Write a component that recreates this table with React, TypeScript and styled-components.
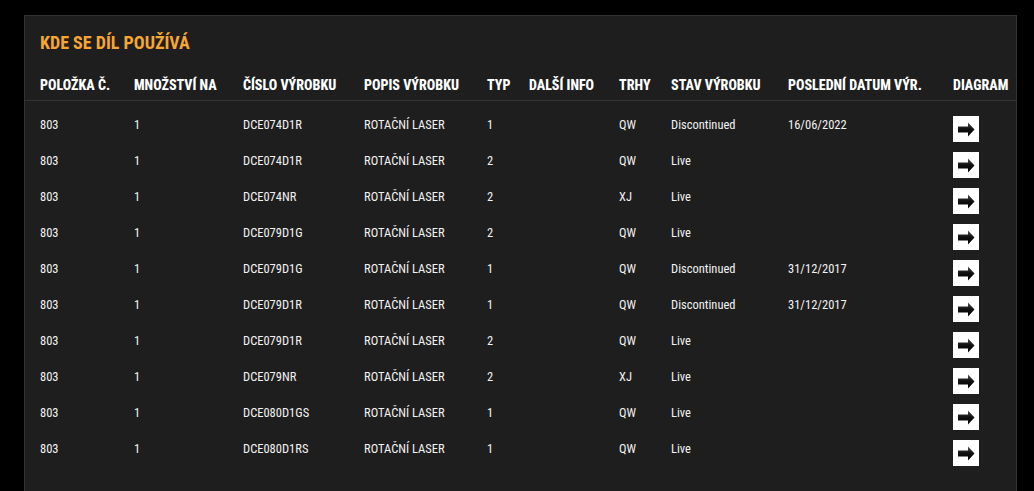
import React from "react";
import styled, { createGlobalStyle } from "styled-components";

const GlobalStyle = createGlobalStyle`
  html, body { margin: 0; padding: 0; background: #000; }
  body { font-family: "Roboto Condensed", "Roboto", "Liberation Sans", sans-serif; color: #fff; overflow: hidden; }
`;

const Page = styled.div`
  padding: 15px 17px 0 24px;
`;

const Panel = styled.section`
  background: #1e1e1e;
  border: 1px solid #333;
  border-bottom: none;
  min-height: calc(100vh - 15px);
  box-sizing: border-box;
`;

const Title = styled.h2`
  margin: 0;
  padding: 16px 15px 0;
  font-size: 18px;
  line-height: 22px;
  font-weight: 700;
  color: #f7a631;
  text-transform: uppercase;
  letter-spacing: 0;
`;

const COLS = "94px 109px 121px 123px 42px 90px 52px 117px 165px 1fr";

const HeaderRow = styled.div`
  display: grid;
  grid-template-columns: ${COLS};
  margin-top: 23px;
  padding: 0 0 7px 15px;
  border-bottom: 1px solid #333;
`;

const HeadCell = styled.div`
  font-size: 14px;
  line-height: 16px;
  font-weight: 800;
  text-transform: uppercase;
  white-space: nowrap;
  color: #fff;
`;

const Body = styled.div`
  padding-top: 10px;
`;

const Row = styled.div`
  display: grid;
  grid-template-columns: ${COLS};
  height: 36px;
  padding-left: 15px;
  align-items: start;
`;

const Cell = styled.div`
  padding-top: 7px;
  font-size: 12.5px;
  line-height: 14px;
  font-weight: 400;
  color: #f2f2f2;
  white-space: nowrap;
`;

const IconCell = styled.div`
  padding-top: 5px;
`;

const DiagramButton = styled.a`
  display: flex;
  align-items: center;
  justify-content: center;
  width: 26px;
  height: 26px;
  background: #fff;
  cursor: pointer;
`;

const ArrowIcon = () => (
  <svg width="17" height="15" viewBox="0 0 17 15" aria-hidden>
    <defs>
      <linearGradient id="ag" x1="0" y1="0" x2="0" y2="1">
        <stop offset="0" stopColor="#555" />
        <stop offset="0.45" stopColor="#111" />
        <stop offset="1" stopColor="#000" />
      </linearGradient>
    </defs>
    <path d="M0 4.5 H10 V0.5 L16.5 7.5 L10 14.5 V10.5 H0 Z" fill="url(#ag)" />
  </svg>
);

type Item = {
  code: string;
  type: string;
  market: string;
  status: string;
  date?: string;
};

const items: Item[] = [
  { code: "DCE074D1R", type: "1", market: "QW", status: "Discontinued", date: "16/06/2022" },
  { code: "DCE074D1R", type: "2", market: "QW", status: "Live" },
  { code: "DCE074NR", type: "2", market: "XJ", status: "Live" },
  { code: "DCE079D1G", type: "2", market: "QW", status: "Live" },
  { code: "DCE079D1G", type: "1", market: "QW", status: "Discontinued", date: "31/12/2017" },
  { code: "DCE079D1R", type: "1", market: "QW", status: "Discontinued", date: "31/12/2017" },
  { code: "DCE079D1R", type: "2", market: "QW", status: "Live" },
  { code: "DCE079NR", type: "2", market: "XJ", status: "Live" },
  { code: "DCE080D1GS", type: "1", market: "QW", status: "Live" },
  { code: "DCE080D1RS", type: "1", market: "QW", status: "Live" },
];

const headers = [
  "Položka č.",
  "Množství na",
  "Číslo výrobku",
  "Popis výrobku",
  "Typ",
  "Další info",
  "Trhy",
  "Stav výrobku",
  "Poslední datum výr.",
  "Diagram",
];

export default function App() {
  return (
    <>
      <GlobalStyle />
      <Page>
        <Panel>
          <Title>Kde se díl používá</Title>
          <HeaderRow>
            {headers.map((h) => (
              <HeadCell key={h}>{h}</HeadCell>
            ))}
          </HeaderRow>
          <Body>
            {items.map((it, i) => (
              <Row key={i}>
                <Cell>803</Cell>
                <Cell>1</Cell>
                <Cell>{it.code}</Cell>
                <Cell>ROTAČNÍ LASER</Cell>
                <Cell>{it.type}</Cell>
                <Cell></Cell>
                <Cell>{it.market}</Cell>
                <Cell>{it.status}</Cell>
                <Cell>{it.date ?? ""}</Cell>
                <IconCell>
                  <DiagramButton>
                    <ArrowIcon />
                  </DiagramButton>
                </IconCell>
              </Row>
            ))}
          </Body>
        </Panel>
      </Page>
    </>
  );
}
